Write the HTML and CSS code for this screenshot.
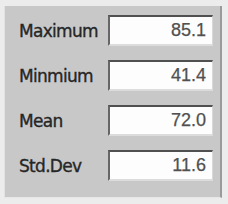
FILE: index.html
```html
<!DOCTYPE html>
<html lang="en">
<head>
  <meta charset="UTF-8" />
  <title>Statistics</title>
  <link rel="stylesheet" href="styles.css">
</head>
<body>
  <div class="panel">
    <div class="row">
      <span class="label">Maximum</span>
      <div class="field">85.1</div>
    </div>
    <div class="row">
      <span class="label">Minmium</span>
      <div class="field">41.4</div>
    </div>
    <div class="row">
      <span class="label">Mean</span>
      <div class="field">72.0</div>
    </div>
    <div class="row">
      <span class="label">Std.Dev</span>
      <div class="field">11.6</div>
    </div>
  </div>
</body>
</html>
```

FILE: styles.css
```css
* {
  box-sizing: border-box;
}
body {
  margin: 0;
  width: 228px;
  height: 204px;
  background-color: #ececec;
  overflow: hidden;
}
.panel {
  margin: 6px 0 0 4px;
  width: 218px;
  height: 192px;
  background-color: #c8c8c8;
  border-left: 1px solid #e2e2e2;
  border-right: 2px solid #9a9a9a;
  border-bottom: 1px solid #e6e6e6;
  padding: 9px 0 0 14px;
  display: flex;
  flex-direction: column;
  gap: 14px;
}
.row {
  display: flex;
  align-items: center;
  height: 31px;
}
.label {
  width: 89px;
  font-family: "DejaVu Sans", sans-serif;
  font-size: 17px;
  letter-spacing: -0.7px;
  color: #262626;
  -webkit-text-stroke: 0.35px #262626;
}
.field {
  width: 105px;
  height: 31px;
  background-color: #fdfdfd;
  border-top: 2px solid #505050;
  border-left: 2px solid #666;
  border-right: 1px solid #d8d8d8;
  border-bottom: 2px solid #dcdcdc;
  font-family: "Liberation Sans", Arial, sans-serif;
  font-size: 18px;
  color: #505050;
  -webkit-text-stroke: 0.25px #505050;
  text-align: right;
  padding-right: 6px;
  line-height: 26px;
}
```
